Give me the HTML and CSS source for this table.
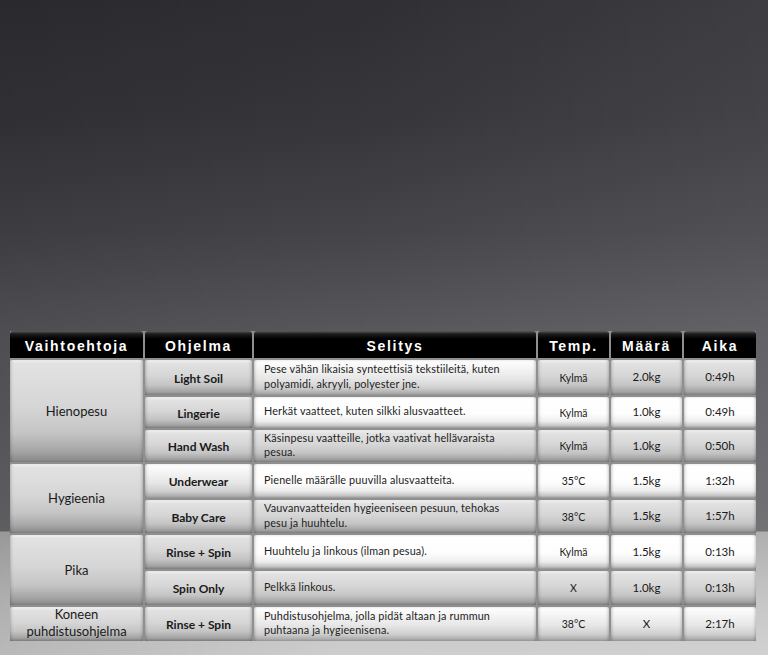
FILE: index.html
```html
<!DOCTYPE html>
<html lang="fi">
<head>
<meta charset="utf-8">
<title>Ohjelmat</title>
<link rel="stylesheet" href="styles.css">
</head>
<body>
<main class="page">
  <div class="table">
    <div class="th">Vaihtoehtoja</div>
    <div class="th">Ohjelma</div>
    <div class="th">Selitys</div>
    <div class="th">Temp.</div>
    <div class="th">Määrä</div>
    <div class="th">Aika</div>

    <div class="cell g group span3">Hienopesu</div>
    <div class="cell g prog">Light Soil</div>
    <div class="cell m desc">Pese vähän likaisia synteettisiä tekstiileitä, kuten polyamidi, akryyli, polyester jne.</div>
    <div class="cell g small">Kylmä</div>
    <div class="cell g num">2.0kg</div>
    <div class="cell g num">0:49h</div>

    <div class="cell g prog">Lingerie</div>
    <div class="cell w desc">Herkät vaatteet, kuten silkki alusvaatteet.</div>
    <div class="cell w small">Kylmä</div>
    <div class="cell w num">1.0kg</div>
    <div class="cell w num">0:49h</div>

    <div class="cell g prog">Hand Wash</div>
    <div class="cell g desc">Käsinpesu vaatteille, jotka vaativat hellävaraista pesua.</div>
    <div class="cell g small">Kylmä</div>
    <div class="cell g num">1.0kg</div>
    <div class="cell g num">0:50h</div>

    <div class="cell g group span2">Hygieenia</div>
    <div class="cell m prog">Underwear</div>
    <div class="cell w desc">Pienelle määrälle puuvilla alusvaatteita.</div>
    <div class="cell w small">35°C</div>
    <div class="cell w num">1.5kg</div>
    <div class="cell w num">1:32h</div>

    <div class="cell g prog">Baby Care</div>
    <div class="cell g desc">Vauvanvaatteiden hygieeniseen pesuun, tehokas pesu ja huuhtelu.</div>
    <div class="cell g small">38°C</div>
    <div class="cell g num">1.5kg</div>
    <div class="cell g num">1:57h</div>

    <div class="cell g group span2">Pika</div>
    <div class="cell g prog">Rinse + Spin</div>
    <div class="cell w desc">Huuhtelu ja linkous (ilman pesua).</div>
    <div class="cell w small">Kylmä</div>
    <div class="cell w num">1.5kg</div>
    <div class="cell w num">0:13h</div>

    <div class="cell g prog">Spin Only</div>
    <div class="cell g desc">Pelkkä linkous.</div>
    <div class="cell g small">X</div>
    <div class="cell g num">1.0kg</div>
    <div class="cell g num">0:13h</div>

    <div class="cell g group two">Koneen<br>puhdistusohjelma</div>
    <div class="cell g prog">Rinse + Spin</div>
    <div class="cell m desc">Puhdistusohjelma, jolla pidät altaan ja rummun puhtaana ja hygieenisena.</div>
    <div class="cell m small">38°C</div>
    <div class="cell m num">X</div>
    <div class="cell m num">2:17h</div>
  </div>
</main>
</body>
</html>
```

FILE: styles.css
```css
html, body {
  margin: 0;
  padding: 0;
}

body {
  min-height: 655px;
  font-family: Lato, "Open Sans", sans-serif;
  color: #1a1a1a;
  background:
    linear-gradient(to right, rgba(0,0,0,0.10) 0%, rgba(0,0,0,0) 45%, rgba(255,255,255,0.07) 100%),
    linear-gradient(to bottom,
      #2e2e33 0px, #35353a 120px, #434348 230px, #56565b 330px,
      #5e5e63 430px, #68686c 531px,
      #a9a9a9 532px, #c2c2c2 600px, #cecece 655px);
}

.page {
  padding: 331px 12px 14px 10px;
}

.table {
  display: grid;
  grid-template-columns: 133px 107px 282px 71px 71px 72px;
  grid-template-rows: 27px 35px 31px 32px 34px 33px 34px 34px 34px;
  gap: 2px;
  background: #8f8f8f;
  width: 746px;
}

.th {
  display: flex;
  align-items: center;
  justify-content: center;
  background: linear-gradient(to bottom, #5a5a5a 0px, #1c1c1c 3px, #000 8px, #000 100%);
  border-radius: 3px 3px 0 0;
  color: #fff;
  font-family: "Liberation Sans", Arial, sans-serif;
  font-weight: bold;
  font-size: 14px;
  letter-spacing: 1.7px;
  padding-top: 2px;
}

.cell {
  display: flex;
  align-items: center;
  justify-content: center;
  text-align: center;
  border-radius: 2px 2px 0 0;
  box-shadow: inset 2px 0 3px -1px rgba(0,0,0,0.22), inset -2px 0 3px -1px rgba(0,0,0,0.22);
}

.g {
  background: linear-gradient(to bottom, #fbfbfb 0px, #e2e2e2 3px, #d6d6d6 45%, #c4c4c4 72%, #a4a4a4 90%, #868686 100%);
}

.m {
  background: linear-gradient(to bottom, #ffffff 0px, #f4f4f4 25%, #e6e6e6 55%, #cfcfcf 80%, #a0a0a0 100%);
}

.w {
  background: linear-gradient(to bottom, #ffffff 0px, #fdfdfd 55%, #eeeeee 78%, #c8c8c8 92%, #a2a2a2 100%);
}

.group {
  font-size: 13px;
  line-height: 17px;
}

.span3 { grid-row: span 3; }
.span2 { grid-row: span 2; }

.two {
  padding-bottom: 2px;
}

.prog {
  font-size: 12px;
  font-weight: bold;
  padding-top: 1px;
}

.desc {
  justify-content: flex-start;
  text-align: left;
  padding: 0 28px 2px 10px;
  font-size: 10.8px;
  letter-spacing: 0.15px;
  line-height: 14.5px;
  color: #222;
}

.small {
  font-size: 10.5px;
}

.num {
  font-size: 11.5px;
  padding-bottom: 2px;
}
```
